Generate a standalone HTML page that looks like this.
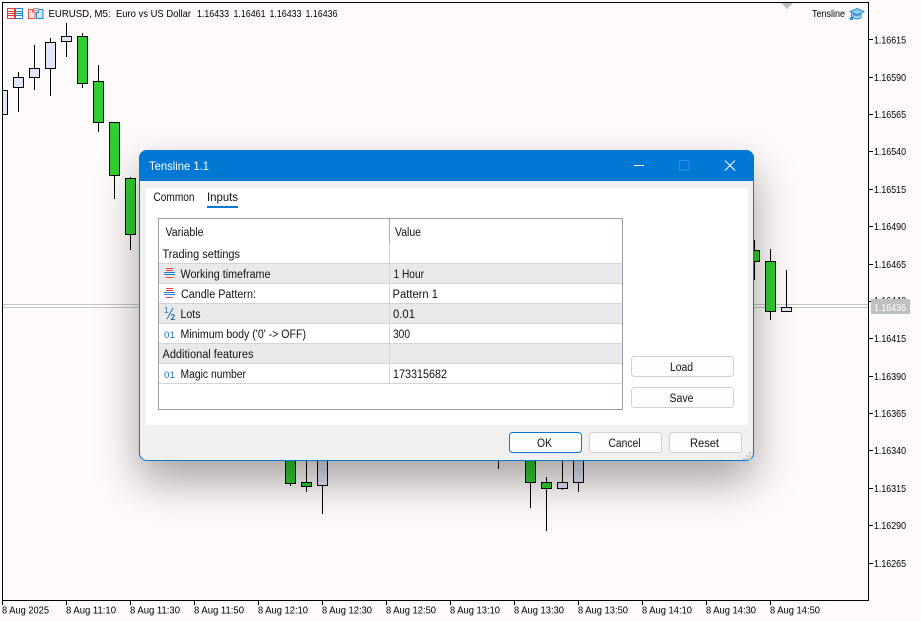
<!DOCTYPE html>
<html><head><meta charset="utf-8"><style>
html,body{margin:0;padding:0;width:921px;height:621px;overflow:hidden;background:#fffafa}
svg{position:absolute;left:0;top:0}
#dlg{position:absolute;left:139px;top:150px;width:613px;height:309px;border:1px solid #0078d4;border-radius:8px;background:#f0f0f0;box-shadow:0 20px 44px rgba(0,0,0,.36)}
.c text{font-family:"Liberation Sans",sans-serif;font-size:10.5px;fill:#000}
.d text{font-family:"Liberation Sans",sans-serif;font-size:11.5px;fill:#111}
.w{fill:none;stroke:#000;stroke-width:1}
.g{fill:#32cd32;stroke:#000}
.l{fill:#e1e5f7;stroke:#000}
.b{fill:#fdfdfd;stroke:#d0d0d0}
</style></head><body>
<svg class="c" width="921" height="621" viewBox="0 0 921 621">
<path d="M2.5 2V600.5H868.5V2M2 2.5H868" fill="none" stroke="#000"/>
<path d="M3 304.5H868M3 307.5H868" stroke="#c4c4c4" fill="none"/>
<path d="M2.5 600v5M66.5 600v5M130.5 600v5M194.5 600v5M258.5 600v5M322.5 600v5M386.5 600v5M450.5 600v5M514.5 600v5M578.5 600v5M642.5 600v5M706.5 600v5M770.5 600v5M869 39.5h4M869 77.5h4M869 114.5h4M869 151.5h4M869 189.5h4M869 226.5h4M869 264.5h4M869 301.5h4M869 338.5h4M869 376.5h4M869 413.5h4M869 450.5h4M869 488.5h4M869 525.5h4M869 563.5h4" stroke="#000" fill="none"/>
<path class="w" d="M18.5 72V112M34.5 45V90M50.5 38V96M66.5 23V57M82.5 33V88M98.5 65V132M114.5 122V199M130.5 177V250M754.5 240V280M770.5 249V320M786.5 270V308M290.5 440V486M306.5 440V492M322.5 440V514M498.5 440V469M530.5 440V508M546.5 477V531M562.5 440V490M578.5 440V492"/>
<rect class="l" x="2.5" y="90.5" width="5" height="24"/>
<rect class="l" x="13.5" y="77.5" width="10" height="10"/>
<rect class="l" x="29.5" y="68.5" width="10" height="9"/>
<rect class="l" x="45.5" y="42.5" width="10" height="26"/>
<rect class="l" x="61.5" y="36.5" width="10" height="5"/>
<rect class="g" x="77.5" y="36.5" width="10" height="47"/>
<rect class="g" x="93.5" y="81.5" width="10" height="41"/>
<rect class="g" x="109.5" y="122.5" width="10" height="53"/>
<rect class="g" x="125.5" y="178.5" width="10" height="56"/>
<rect class="g" x="749.5" y="250.5" width="10" height="11"/>
<rect class="g" x="765.5" y="261.5" width="10" height="50"/>
<rect class="l" x="781.5" y="307.5" width="10" height="4"/>
<rect class="g" x="285.5" y="440.5" width="10" height="43"/>
<rect class="g" x="301.5" y="482.5" width="10" height="4"/>
<rect class="l" x="317.5" y="440.5" width="10" height="45"/>
<rect class="g" x="525.5" y="440.5" width="10" height="42"/>
<rect class="g" x="541.5" y="482.5" width="10" height="6"/>
<rect class="l" x="557.5" y="482.5" width="10" height="6"/>
<rect class="l" x="573.5" y="440.5" width="10" height="42"/>
<path d="M781 3h12l-6 6z" fill="#bdbdbd"/>
<g fill="#fff" stroke-width="1">
<rect x="7.5" y="8.5" width="7" height="10" stroke="#f03a3a"/>
<rect x="15.5" y="8.5" width="7" height="10" stroke="#1a86d8"/>
<path d="M8 11.5h7M8 13.5h7M8 15.5h7" stroke="#f03a3a"/>
<path d="M16 11.5h6M16 13.5h6M16 15.5h6" stroke="#1a86d8"/>
<path d="M28.5 9.5h4v2.5h2.5v6.5h-6.5z" fill="#ffe3dc" stroke="#f05050"/>
<path d="M36.5 12.5h2v-3h4.5v9h-6.5z" fill="#d4e8f8" stroke="#1a86d8"/>
<rect x="33.5" y="8.5" width="5" height="2" fill="#eee" stroke="#a0a0a0"/>
</g>
<path d="M857 8.5l7 3-7 3.5-7-3.5z" fill="#8ccbf2" stroke="#2f8fd0"/>
<path d="M853 14v3.5c2 2 6 2 8 0V14l-4 2z" fill="#a9d8f5" stroke="#2f8fd0"/>
<path d="M851.5 12v6" stroke="#2f8fd0"/><rect x="850" y="17" width="3" height="3" fill="#2f8fd0"/>
<text x="48.5" y="17" textLength="62" lengthAdjust="spacingAndGlyphs">EURUSD, M5:</text>
<text x="116" y="17" textLength="75" lengthAdjust="spacingAndGlyphs">Euro vs US Dollar</text>
<text x="197" y="17" textLength="32" lengthAdjust="spacingAndGlyphs">1.16433</text>
<text x="233.5" y="17" textLength="32" lengthAdjust="spacingAndGlyphs">1.16461</text>
<text x="269.5" y="17" textLength="32" lengthAdjust="spacingAndGlyphs">1.16433</text>
<text x="305.5" y="17" textLength="32" lengthAdjust="spacingAndGlyphs">1.16436</text>
<text x="812" y="17" textLength="33" lengthAdjust="spacingAndGlyphs">Tensline</text>
<g>
<text x="874" y="43.5" textLength="32" lengthAdjust="spacingAndGlyphs">1.16615</text>
<text x="874" y="81" textLength="32" lengthAdjust="spacingAndGlyphs">1.16590</text>
<text x="874" y="118" textLength="32" lengthAdjust="spacingAndGlyphs">1.16565</text>
<text x="874" y="155" textLength="32" lengthAdjust="spacingAndGlyphs">1.16540</text>
<text x="874" y="193" textLength="32" lengthAdjust="spacingAndGlyphs">1.16515</text>
<text x="874" y="230" textLength="32" lengthAdjust="spacingAndGlyphs">1.16490</text>
<text x="874" y="268" textLength="32" lengthAdjust="spacingAndGlyphs">1.16465</text>
<text x="874" y="304" textLength="32" lengthAdjust="spacingAndGlyphs">1.16440</text>
<text x="874" y="342" textLength="32" lengthAdjust="spacingAndGlyphs">1.16415</text>
<text x="874" y="380" textLength="32" lengthAdjust="spacingAndGlyphs">1.16390</text>
<text x="874" y="417" textLength="32" lengthAdjust="spacingAndGlyphs">1.16365</text>
<text x="874" y="454" textLength="32" lengthAdjust="spacingAndGlyphs">1.16340</text>
<text x="874" y="492" textLength="32" lengthAdjust="spacingAndGlyphs">1.16315</text>
<text x="874" y="529" textLength="32" lengthAdjust="spacingAndGlyphs">1.16290</text>
<text x="874" y="567" textLength="32" lengthAdjust="spacingAndGlyphs">1.16265</text>
</g>
<rect x="871" y="299" width="39" height="15" fill="#c0c0c0"/>
<text x="874" y="311" textLength="32" lengthAdjust="spacingAndGlyphs" style="fill:#fff">1.16436</text>
<g>
<text x="2" y="613.5" textLength="47" lengthAdjust="spacingAndGlyphs">8 Aug 2025</text>
<text x="66" y="613.5" textLength="50" lengthAdjust="spacingAndGlyphs">8 Aug 11:10</text>
<text x="130" y="613.5" textLength="50" lengthAdjust="spacingAndGlyphs">8 Aug 11:30</text>
<text x="194" y="613.5" textLength="50" lengthAdjust="spacingAndGlyphs">8 Aug 11:50</text>
<text x="258" y="613.5" textLength="50" lengthAdjust="spacingAndGlyphs">8 Aug 12:10</text>
<text x="322" y="613.5" textLength="50" lengthAdjust="spacingAndGlyphs">8 Aug 12:30</text>
<text x="386" y="613.5" textLength="50" lengthAdjust="spacingAndGlyphs">8 Aug 12:50</text>
<text x="450" y="613.5" textLength="50" lengthAdjust="spacingAndGlyphs">8 Aug 13:10</text>
<text x="514" y="613.5" textLength="50" lengthAdjust="spacingAndGlyphs">8 Aug 13:30</text>
<text x="578" y="613.5" textLength="50" lengthAdjust="spacingAndGlyphs">8 Aug 13:50</text>
<text x="642" y="613.5" textLength="50" lengthAdjust="spacingAndGlyphs">8 Aug 14:10</text>
<text x="706" y="613.5" textLength="50" lengthAdjust="spacingAndGlyphs">8 Aug 14:30</text>
<text x="770" y="613.5" textLength="50" lengthAdjust="spacingAndGlyphs">8 Aug 14:50</text>
</g>
</svg>
<div id="dlg"></div>
<svg class="d" width="921" height="621" viewBox="0 0 921 621">
<path d="M147 150H746a8 8 0 0 1 8 8V181H139V158a8 8 0 0 1 8-8z" fill="#0078d4"/>
<text x="149" y="170" textLength="60" lengthAdjust="spacingAndGlyphs" style="fill:#fff;font-size:12px">Tensline 1.1</text>
<path d="M634 165.5h10" stroke="#fff" fill="none"/>
<rect x="679.5" y="160.5" width="9.5" height="9.5" fill="none" stroke="#2b8ddb"/>
<path d="M725 160.5l10 10M735 160.5l-10 10" stroke="#fff" fill="none"/>
<rect x="146" y="188" width="602" height="237" fill="#fff"/>
<text x="153.5" y="201" textLength="41" lengthAdjust="spacingAndGlyphs">Common</text>
<text x="207" y="201" textLength="31" lengthAdjust="spacingAndGlyphs">Inputs</text>
<rect x="207" y="206" width="31" height="2" fill="#0078d4"/>
<rect x="158.5" y="218.5" width="464" height="191" fill="#fff" stroke="#9a9aa8"/>
<g fill="#e9e9e9">
<rect x="159" y="264" width="463" height="19"/>
<rect x="159" y="304" width="463" height="19"/>
<rect x="159" y="344" width="463" height="19"/>
</g>
<path d="M159 263.5H622M159 283.5H622M159 303.5H622M159 323.5H622M159 343.5H622M159 363.5H622M159 383.5H622M389.5 244V384" stroke="#d4d4d4" fill="none"/>
<path d="M389.5 219V244" stroke="#a8a8a8" fill="none"/>
<text x="165.5" y="236" textLength="38" lengthAdjust="spacingAndGlyphs">Variable</text>
<text x="395" y="236" textLength="26" lengthAdjust="spacingAndGlyphs">Value</text>
<text x="162.5" y="258" textLength="77.5" lengthAdjust="spacingAndGlyphs">Trading settings</text>
<text x="180.5" y="278" textLength="90" lengthAdjust="spacingAndGlyphs">Working timeframe</text>
<text x="393.5" y="278" textLength="30.5" lengthAdjust="spacingAndGlyphs">1 Hour</text>
<text x="181" y="298" textLength="75" lengthAdjust="spacingAndGlyphs">Candle Pattern:</text>
<text x="392.5" y="298" textLength="45.5" lengthAdjust="spacingAndGlyphs">Pattern 1</text>
<text x="180.5" y="318" textLength="20" lengthAdjust="spacingAndGlyphs">Lots</text>
<text x="393" y="318" textLength="22" lengthAdjust="spacingAndGlyphs">0.01</text>
<text x="180.5" y="338" textLength="125.5" lengthAdjust="spacingAndGlyphs">Minimum body ('0' -&gt; OFF)</text>
<text x="393" y="338" textLength="17" lengthAdjust="spacingAndGlyphs">300</text>
<text x="162.5" y="358" textLength="91" lengthAdjust="spacingAndGlyphs">Additional features</text>
<text x="180.5" y="378" textLength="65.5" lengthAdjust="spacingAndGlyphs">Magic number</text>
<text x="393" y="378" textLength="54" lengthAdjust="spacingAndGlyphs">173315682</text>
<path d="M166 268.5h7M166 270.5h7M166 277.5h7" fill="none" stroke="#ef4444"/>
<path d="M164 272.5h11M164 274.5h11" fill="none" stroke="#1a7fd0"/>
<path d="M166 288.5h7M166 290.5h7M166 297.5h7" fill="none" stroke="#ef4444"/>
<path d="M164 292.5h11M164 294.5h11" fill="none" stroke="#1a7fd0"/>
<text x="164" y="313" style="font-size:8.5px;fill:#2a6cb0">1</text>
<path d="M173 308l-6 11" stroke="#2a6cb0" fill="none"/>
<text x="170.5" y="320" style="font-size:8.5px;fill:#2a6cb0;font-weight:bold">2</text>
<text x="164" y="338" textLength="11" lengthAdjust="spacingAndGlyphs" style="font-size:9.5px;fill:#1f70c0">01</text>
<text x="164" y="378" textLength="11" lengthAdjust="spacingAndGlyphs" style="font-size:9.5px;fill:#1f70c0">01</text>
<rect class="b" x="631.5" y="356.5" width="102" height="20" rx="3"/>
<rect class="b" x="631.5" y="387.5" width="102" height="20" rx="3"/>
<rect x="509.5" y="432.5" width="72" height="20" rx="3" fill="#fdfdfd" stroke="#0078d4"/>
<rect class="b" x="589.5" y="432.5" width="72" height="20" rx="3"/>
<rect class="b" x="669.5" y="432.5" width="72" height="20" rx="3"/>
<text x="670" y="371" textLength="23" lengthAdjust="spacingAndGlyphs">Load</text>
<text x="669.5" y="402" textLength="24" lengthAdjust="spacingAndGlyphs">Save</text>
<text x="537" y="447" textLength="15" lengthAdjust="spacingAndGlyphs">OK</text>
<text x="608.5" y="447" textLength="32" lengthAdjust="spacingAndGlyphs">Cancel</text>
<text x="690" y="447" textLength="29" lengthAdjust="spacingAndGlyphs">Reset</text>
<path d="M749 452h2v2h-2zM746 455h2v2h-2zM749 455h2v2h-2zM743 458h2v2h-2zM746 458h2v2h-2zM749 458h2v2h-2z" fill="#c4c4c4"/>
</svg>
</body></html>
